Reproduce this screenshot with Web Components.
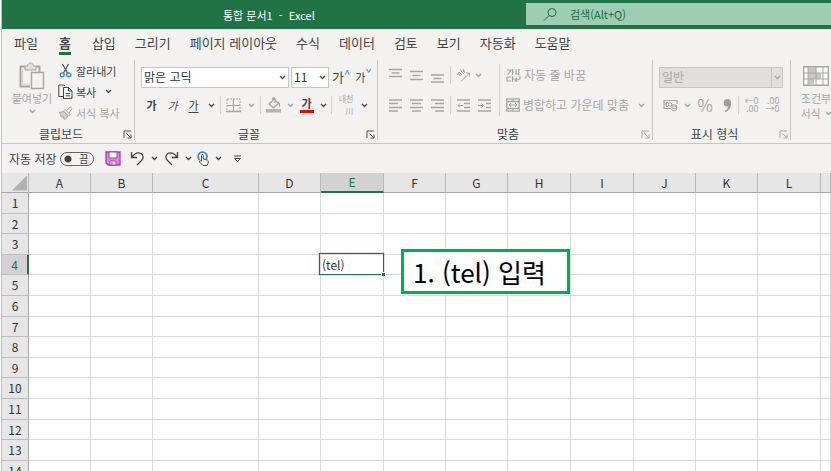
<!DOCTYPE html>
<html lang="ko">
<head>
<meta charset="utf-8">
<title>통합 문서1 - Excel</title>
<style>
html, body { height: 100%; }
body { margin: 0; overflow: hidden; background: #fff; color: #444; font: 12px/16px "Noto Sans CJK KR", "Noto Sans", sans-serif; }
</style>
</head>
<body>
<xl-window></xl-window>
<script>
const icons = {
  caret: [7, 5, '<path d="M1 1l2.5 2.5L6 1" stroke-width="1.3"/>'],
  search: [15, 15, '<circle cx="9" cy="5.5" r="4"/><path d="M6 8.5L1 13.5"/>'],
  launcher: [9, 9, '<path d="M1 8V1h7M3.500 3.500L8 8M8 4.500V8H4.500"/>'],
  paste: [26, 28, '<path d="M6 4.500H1.500v20H11M17 4.500h3.500V10" stroke-width="2"/><path fill="#e4e2e0" d="M6 8V4h2.500c.5-4 5.500-4 6 0H17v4z"/><path fill="#f3f2f1" d="M12.500 10.500h12v16h-12z" stroke-width="1.400"/><path d="M3.500 7v15H11" stroke="#d6d4d2"/>'],
  cut: [15, 15, '<path d="M4.500 1l5 9M10.500 1l-5 9" stroke="#555" stroke-width="1.300"/><circle cx="4.200" cy="11.800" r="2" stroke="#2b88d8" stroke-width="1.300"/><circle cx="10.800" cy="11.800" r="2" stroke="#2b88d8" stroke-width="1.300"/>'],
  copy: [15, 15, '<path d="M6 12.500H.8V1h5l1 1"/><path fill="#fff" d="M5.500 3.500h5l3.500 3.500v7.500H5.500z"/><path d="M10.500 3.500V7H14M7.500 9.500H12M7.500 11.800H12"/>'],
  painter: [15, 14, '<path fill="#d2d0ce" d="M1 6.500l4.500-1L10 10l-3 3.500-2-1.500.5-1.500-2 .5-1-1.500.5-1z"/><path fill="#f3f2f1" d="M5.500 5L7 3.500l5 5-1.500 1.500zM8.500 4.500l4-3.500L14 2.500 11 7"/>'],
  border: [15, 15, '<path d="M1 1h13v12" stroke-dasharray="2 1"/><path d="M1 1v12" stroke-dasharray="2 1"/><path d="M1 7.500h13M7.500 1v12"/><path d="M0 13.500h15" stroke-width="1.500"/>'],
  fill: [16, 16, '<path stroke-width="1.300" d="M3 7l5-5 4.500 4.500L7.500 11zM6.500 4.500V2c0-1.500 2.500-1.500 2.500 0v4M12 5c1.500 1.500 2 3 1.500 5"/><path fill="#b5b3b1" stroke="none" d="M0 12h15v3.500H0z"/>'],
  top: [13, 15, '<path d="M0 1.500h13M2.500 5h8M0 8.500h13" stroke-width="1.300"/>'],
  middle: [13, 15, '<path d="M0 3.500h13M2.500 7.500h8M0 11.500h13" stroke-width="1.300"/>'],
  bottom: [13, 15, '<path d="M0 7h13M2.500 10.500h8M0 14h13" stroke-width="1.300"/>'],
  left: [13, 13, '<path d="M0 1h13M0 4.500h9M0 8.500h13M0 12h9" stroke-width="1.300"/>'],
  center: [13, 13, '<path d="M0 1h13M2 4.500h9M0 8.500h13M2 12h9" stroke-width="1.300"/>'],
  right: [13, 13, '<path d="M0 1h13M4 4.500h9M0 8.500h13M4 12h9" stroke-width="1.300"/>'],
  outdent: [13, 13, '<path stroke-width="1.300" d="M0 1h13M7 4.500h6M7 8.500h6M0 12h13"/><path d="M6 6.500H1M3 4.500L1 6.500l2 2"/>'],
  indent: [13, 13, '<path stroke-width="1.300" d="M0 1h13M8 4.500h5M8 8.500h5M0 12h13"/><path d="M0 6.500h5.500M3.500 4.500l2 2-2 2"/>'],
  orient: [15, 15, '<path d="M5 13.500L13.500 5M10 5h3.500v3.500M1 7l2-3 3 3M2 5.500l2.500 2.500M5 3l3 3M4.500 1.500l1 2M7 1l1.500 4M6 4.500L9 2.500"/>'],
  wrap: [15, 15, '<path stroke-width="1.200" d="M1 2h4L2 6.500M6.500 1v6M6.500 4H8M10 1.500V6h3M12.800 1v6.500M5 9H1v4h4M6.500 8v6M6.500 11H8M14 8v2.500c0 1.500-2 1.500-5 1.500M11 10l-2 2 2 2"/>'],
  merge: [14, 14, '<path d="M.8.8h12.400v12.400H.8zM1 3.500h12M1 10.500h12M7 1v2.500M7 10.500V13" stroke-width="1.300"/><path d="M3 7h8M5 5L3 7l2 2M9 5l2 2-2 2"/>'],
  money: [15, 13, '<path stroke-width="1.200" d="M8 9.500H1v-8h13V5M3 3.500h2M3 7.500h2M3 3.500v4"/><circle cx="7" cy="5.500" r="1.800"/><path fill="#f3f2f1" d="M9 6.500v4.500c0 1 4.500 1 4.500 0V6.500c0-1-4.500-1-4.500 0c0 1 4.500 1 4.500 0M9 9c0 1 4.500 1 4.500 0"/>'],
  comma: [9, 13, '<path fill="#a19f9d" stroke="none" d="M4.500 0c2.500 0 3.700 1.800 3.700 4.200C8.200 8.500 6 11.500 2 13v-1.500c2-.8 3-2 3.200-4C2.700 8.200.7 6.500.7 4S2.200 0 4.500 0z"/>'],
  conditional: [26, 20, '<path fill="#fff" d="M.7.7h24.600v18.600H.7z" stroke-width="1.400"/><path fill="#c8c6c4" stroke="none" d="M5 1h8v6H5zM5 7h13v6H5zM5 13h6v6H5z"/><path d="M5 1v18M20 1v18M13 1v18M1 7h24M1 13h24"/>'],
  save: [16, 15, '<path fill="#d58fd9" stroke="#a83bb0" stroke-width="1.300" d="M1 1h14v13H3l-2-2z"/><path fill="#fff" stroke="#a83bb0" d="M4 1h8v6H4zM5 10h6v4H5z"/><path stroke="#a83bb0" d="M7 11v3"/>'],
  undo: [15, 15, '<path d="M1.500 1v5.500H7M1.500 6.500C5 2 8 1 11 2.500c3 2 2.500 5 .5 7L7 14" stroke-width="1.300"/>'],
  redo: [15, 15, '<path d="M13.500 1v5.500H8M13.500 6.500C10 2 7 1 4 2.500c-3 2-2.500 5-.5 7L8 14" stroke-width="1.300"/>'],
  touch: [13, 16, '<path stroke="#2b88d8" stroke-width="1.600" d="M2.500 9C-.5 5 2 1 5.500 1s6 4 3.500 7"/><path fill="#fff" d="M4.500 10V4.500c0-1.300 1.800-1.300 1.800 0V8l4 1c1.500.5 1.200 3-.3 5.500H6L2.500 11c-.5-1.300 1-1.700 2-1z"/>'],
  customize: [9, 8, '<path d="M1 1h7M1.500 3.500L4.500 6.500l3-3z"/>'],
};

function define(name, html, setup) {
  const template = document.createElement('template');
  template.innerHTML = html;
  customElements.define(name, class extends HTMLElement {
    constructor() {
      super();
      this.attachShadow({ mode: 'open' }).append(template.content.cloneNode(true));
    }
    connectedCallback() { if (setup) setup(this, this.shadowRoot); }
  });
}

define('xl-icon', `<style>:host{display:inline-flex;flex:none}svg{display:block;fill:none;stroke:currentColor}</style>`, (el, root) => {
  const [w, h, body] = icons[el.getAttribute('name')];
  root.innerHTML += `<svg width="${w}" height="${h}" viewBox="0 0 ${w} ${h}" aria-hidden="true">${body}</svg>`;
});

define('xl-tool', `<style>
:host{display:flex;flex:none;width:var(--w,21px);color:#444}
:host([dim]){color:#a8a6a4}
button{all:unset;box-sizing:border-box;width:100%;display:flex;align-items:center;justify-content:center;gap:3px;white-space:nowrap}
:host([wide]){width:auto}
:host([wide]) button{justify-content:flex-start}
:host([tall]) button{flex-direction:column;justify-content:flex-start;gap:0}
</style><button type="button"><slot></slot></button>`, (el, root) => {
  if (el.title) { root.querySelector('button').setAttribute('aria-label', el.title); el.removeAttribute('title'); }
});

define('xl-combo', `<style>
:host{display:grid;flex:none;width:var(--w);height:21px;align-items:center}
select{grid-area:1/1;appearance:none;box-sizing:border-box;width:100%;height:100%;margin:0;padding:0 16px 0 2px;border:1px solid #c8c6c4;border-radius:0;background:#fff;color:#333;font:inherit;opacity:1}
xl-icon{grid-area:1/1;justify-self:end;margin-right:3px;pointer-events:none;color:#444}
:host([dim]) select{background:#e1dfdd;color:#a8a6a4;border-color:#c8c6c4}
:host([dim]) xl-icon{color:#a8a6a4;border-left:1px solid #c8c6c4;padding:7px 0 7px 2px;margin-right:2px}
</style><select><option></option></select><xl-icon name="caret"></xl-icon>`, (el, root) => {
  const select = root.querySelector('select');
  select.setAttribute('aria-label', el.getAttribute('label'));
  select.options[0].textContent = el.getAttribute('value');
  select.disabled = el.hasAttribute('dim');
});

define('xl-group', `<style>
:host{display:grid;grid-template-rows:1fr 12px;flex:none;box-sizing:border-box;width:var(--group);border-right:1px solid #c8c6c4;height:80px}
.body{min-width:0}
footer{display:grid;grid-template-columns:1fr 14px;align-items:center;text-align:center;line-height:12px}
footer span{white-space:nowrap}
button{all:unset;display:flex;justify-self:end;margin-right:2px;color:var(--launch,#555)}
</style><div class="body"><slot></slot></div><footer><span></span><button type="button" aria-label="옵션"><xl-icon name="launcher"></xl-icon></button></footer>`, (el, root) => {
  root.querySelector('footer span').textContent = el.getAttribute('label');
});

define('xl-titlebar', `<style>
:host{display:grid;grid-template-columns:524px 1fr;height:29px;background:#217346;color:#fff;align-items:center;font-size:11px}
h1{margin:0;font:inherit;padding-left:221px;white-space:pre}
label{display:flex;align-items:center;gap:12px;height:22px;background:#9fcdb3;color:#1e6b41;padding-left:17px;margin-bottom:1px}
input{all:unset;flex:1;min-width:0;font-size:11px}
input::placeholder{color:#1e6b41;opacity:1}
</style><h1>통합 문서1  -  Excel</h1><label aria-label="검색"><xl-icon name="search"></xl-icon><input type="search" placeholder="검색(Alt+Q)"></label>`);

define('xl-tabs', `<style>
:host{display:block;background:#f3f2f1;border-top:1px solid #dcebe2}
nav{display:flex;gap:19px;padding:4px 12px 0;font-size:13px;line-height:18px;height:26px;box-sizing:border-box}
a{color:#444;text-decoration:none;white-space:nowrap;height:22px}
a[aria-current]{margin:0 2px;font-weight:700;border-bottom:3px solid #217346;height:18px}
</style><nav aria-label="리본"></nav>`, (el, root) => {
  root.querySelector('nav').innerHTML = ['파일', '홈', '삽입', '그리기', '페이지 레이아웃', '수식', '데이터', '검토', '보기', '자동화', '도움말']
    .map(t => `<a href="#"${t === '홈' ? ' aria-current="page"' : ''}>${t}</a>`).join('');
});

define('xl-ribbon', `<style>
:host{display:flex;box-sizing:border-box;height:88px;padding-top:4px;background:#f3f2f1;border-bottom:1px solid #c8c6c4;overflow:hidden}
.row{display:flex;align-items:center}
.sep{flex:none;width:1px;height:18px;background:#d2d0ce}
.clip{display:grid;grid-template-columns:50px 1fr;padding-left:5px;column-gap:1px;font-size:11px}
.clip xl-tool[tall]{--w:50px;line-height:16px;padding-top:2px}
.clip .rows{display:grid;grid-auto-rows:21px}
.one{height:30px;padding:2px 6px 0}
.two{height:26px;padding:0 1px}
.hangul{font-size:11px}
u{text-underline-offset:2px}
.colour{border-bottom:3px solid #f00;width:14px;text-align:center;line-height:13px;font-weight:700}
sup{font-size:11px;line-height:8px;color:#2b88d8;align-self:flex-start}
.hanja{font-size:8px;line-height:12px;text-align:right}
.align{display:grid;grid-template-columns:114px 1px 1fr;align-items:center;padding-left:7px}
.align .rule{height:52px;background:#d2d0ce}
.align .row{height:30px}
.align .text{padding-left:6px}
.align .text .row{gap:9px}
.percent{font-size:17px}
.dec{font-size:9px;line-height:8px;text-align:right;white-space:pre}
.cond{--w:50px;line-height:15px;padding-top:6px;font-size:11px}
.cond span{display:flex;align-items:center;gap:4px}
.cond xl-icon[name=conditional]{margin-bottom:5px}
</style>
<xl-group label="클립보드" style="--group:133px"><div class="clip">
<xl-tool tall dim><xl-icon name="paste"></xl-icon>붙여넣기<xl-icon name="caret" style="margin-top:3px"></xl-icon></xl-tool>
<div class="rows"><xl-tool wide><xl-icon name="cut"></xl-icon><span>잘라내기</span></xl-tool>
<xl-tool wide><xl-icon name="copy"></xl-icon><span>복사</span><xl-icon name="caret" style="margin-left:6px"></xl-icon></xl-tool>
<xl-tool wide dim><xl-icon name="painter"></xl-icon><span>서식 복사</span></xl-tool></div></div></xl-group>
<xl-group label="글꼴" style="--group:243px">
<div class="row one"><xl-combo label="글꼴" value="맑은 고딕" style="--w:148px"></xl-combo><xl-combo label="글꼴 크기" value="11" style="--w:38px;margin-left:2px"></xl-combo>
<xl-tool title="글꼴 크기 크게" style="--w:24px"><span class="row" style="font-size:13px">가<sup>^</sup></span></xl-tool><xl-tool title="글꼴 크기 작게"><span class="row" style="font-size:11px">가<sup>ˇ</sup></span></xl-tool></div>
<div class="row two hangul" style="padding-left:6px"><xl-tool title="굵게"><b>가</b></xl-tool><xl-tool title="기울임꼴"><i>가</i></xl-tool><xl-tool title="밑줄"><u>가</u></xl-tool><xl-tool title="밑줄 종류" style="--w:14px"><xl-icon name="caret"></xl-icon></xl-tool><span class="sep" style="margin:0 2px"></span>
<xl-tool title="테두리" dim><xl-icon name="border"></xl-icon></xl-tool><xl-tool title="테두리 종류" dim style="--w:14px"><xl-icon name="caret"></xl-icon></xl-tool><span class="sep" style="margin:0 2px"></span>
<xl-tool title="채우기 색" dim><xl-icon name="fill"></xl-icon></xl-tool><xl-tool title="채우기 색 선택" dim style="--w:12px"><xl-icon name="caret"></xl-icon></xl-tool><xl-tool title="글꼴 색"><span class="colour">가</span></xl-tool><xl-tool title="글꼴 색 선택" style="--w:12px"><xl-icon name="caret"></xl-icon></xl-tool><span class="sep" style="margin:0 2px"></span>
<xl-tool title="윗주 필드" dim style="--w:24px"><span class="hanja">내천<br>川</span></xl-tool><xl-tool title="윗주 옵션" style="--w:12px"><xl-icon name="caret"></xl-icon></xl-tool></div></xl-group>
<xl-group label="맞춤" style="--group:275px;--launch:#a8a6a4"><div class="align">
<div><div class="row"><xl-tool title="위쪽 맞춤" dim><xl-icon name="top"></xl-icon></xl-tool><xl-tool title="가운데 맞춤" dim><xl-icon name="middle"></xl-icon></xl-tool><xl-tool title="아래쪽 맞춤" dim><xl-icon name="bottom"></xl-icon></xl-tool><span class="sep" style="margin:0 2px"></span><xl-tool title="방향" dim><xl-icon name="orient"></xl-icon></xl-tool><xl-tool title="방향 선택" dim style="--w:8px"><xl-icon name="caret"></xl-icon></xl-tool></div>
<div class="row"><xl-tool title="왼쪽 맞춤" dim><xl-icon name="left"></xl-icon></xl-tool><xl-tool title="가운데 맞춤" dim><xl-icon name="center"></xl-icon></xl-tool><xl-tool title="오른쪽 맞춤" dim><xl-icon name="right"></xl-icon></xl-tool><span class="sep" style="margin:0 2px"></span><xl-tool title="내어쓰기" dim><xl-icon name="outdent"></xl-icon></xl-tool><xl-tool title="들여쓰기" dim><xl-icon name="indent"></xl-icon></xl-tool></div></div>
<span class="rule"></span>
<div class="text"><div class="row"><xl-tool wide dim><xl-icon name="wrap"></xl-icon><span>자동 줄 바꿈</span></xl-tool></div><div class="row"><xl-tool wide dim><xl-icon name="merge"></xl-icon><span>병합하고 가운데 맞춤</span></xl-tool><xl-tool title="병합 옵션" dim style="--w:7px"><xl-icon name="caret"></xl-icon></xl-tool></div></div></div></xl-group>
<xl-group label="표시 형식" style="--group:138px;--launch:#a8a6a4"><div class="row one"><xl-combo dim label="표시 형식" value="일반" style="--w:124px"></xl-combo></div>
<div class="row two" style="padding-left:7px"><xl-tool title="회계 표시 형식" dim><xl-icon name="money"></xl-icon></xl-tool><xl-tool title="통화 선택" dim style="--w:12px"><xl-icon name="caret"></xl-icon></xl-tool><xl-tool title="백분율" dim style="--w:24px"><span class="percent">%</span></xl-tool><xl-tool title="쉼표" dim><xl-icon name="comma"></xl-icon></xl-tool><span class="sep" style="margin:0 2px 0 0"></span><xl-tool title="자릿수 늘림" dim><span class="dec">←0
.00</span></xl-tool><xl-tool title="자릿수 줄임" dim><span class="dec">.00
→0</span></xl-tool></div></xl-group>
<xl-tool class="cond" tall dim><xl-icon name="conditional"></xl-icon>조건부<span>서식 <xl-icon name="caret"></xl-icon></span></xl-tool>`);

define('xl-quick-access', `<style>
:host{display:flex;align-items:center;height:29px;background:#f3f2f1;padding-left:7px}
label{display:flex;align-items:center;gap:3px;white-space:nowrap}
.switch{display:grid;align-items:center;width:34px;height:14px}
input{grid-area:1/1;appearance:none;margin:0;box-sizing:border-box;width:34px;height:14px;border:1px solid #666;border-radius:7px;background:radial-gradient(circle at 7px 6px,#444 3px,transparent 4px)}
.switch span{grid-area:1/1;justify-self:end;margin-right:5px;font-size:10px;line-height:12px;pointer-events:none}
div{display:flex;align-items:center;padding-left:7px}
</style><label>자동 저장<span class="switch"><input type="checkbox" role="switch"><span>끔</span></span></label>
<div><xl-tool title="저장" style="--w:24px"><xl-icon name="save"></xl-icon></xl-tool>
<xl-tool title="실행 취소" style="--w:26px"><xl-icon name="undo"></xl-icon></xl-tool><xl-tool title="실행 취소 목록" style="--w:8px"><xl-icon name="caret"></xl-icon></xl-tool>
<xl-tool title="다시 실행" style="--w:26px"><xl-icon name="redo"></xl-icon></xl-tool><xl-tool title="다시 실행 목록" style="--w:8px"><xl-icon name="caret"></xl-icon></xl-tool>
<xl-tool title="터치/마우스 모드" style="--w:22px"><xl-icon name="touch"></xl-icon></xl-tool><xl-tool title="모드 선택" style="--w:8px"><xl-icon name="caret"></xl-icon></xl-tool>
<xl-tool title="빠른 실행 도구 모음 사용자 지정" style="--w:30px"><xl-icon name="customize"></xl-icon></xl-tool></div>`);

define('xl-sheet', `<style>
:host{display:block;position:relative;overflow:hidden;flex:1}
table{table-layout:fixed;width:100%;border-spacing:0;color:#333}
th,td{box-sizing:border-box;padding:0;height:21px;line-height:18px;border:0 solid #dadada;border-width:0 1px 1px 0;overflow:hidden;font-weight:400;white-space:nowrap}
tbody tr:nth-child(5n+2)>*,tbody tr:nth-child(5n+4)>*{height:20px}
thead th{height:20px;background:#e6e6e6;border-right-color:#b8b8b8;border-bottom-color:#a6a6a6;line-height:17px}
tbody th{background:#e6e6e6;border-right-color:#a6a6a6;border-bottom-color:#bdbdbd}
thead th:first-child::after{content:"";display:block;width:15px;height:15px;margin:1px 1px 0 auto;background:#b2b2b2;clip-path:polygon(100% 0,100% 100%,0 100%)}
thead th.on{background:#d2d2d2;color:#217346;border-bottom:2px solid #217346;line-height:16px}
tbody th.on{background:#d2d2d2;color:#217346;border-right:2px solid #217346}
td.on{position:relative;overflow:visible;padding-left:1px}
td.on::before{content:"";position:absolute;inset:-2px -1px -1px -2px;border:1px solid #217346;box-shadow:0 0 1px #217346}
td.on::after{content:"";position:absolute;right:-2px;bottom:-2px;width:3px;height:3px;background:#217346;border:solid #fff;border-width:1px 0 0 1px}
</style><table><colgroup></colgroup><thead></thead><tbody></tbody></table><slot></slot>`, (el, root) => {
  const widths = [27, 62, 62, 106, 62, 63, 62, 62, 63, 63, 62, 62, 63];
  root.querySelector('colgroup').innerHTML = widths.map(w => `<col style="width:${w}px">`).join('') + '<col>';
  const letters = [...'ABCDEFGHIJKL', ''];
  root.querySelector('thead').innerHTML = '<tr><th aria-label="모두 선택"></th>' + letters.map(c => `<th scope="col"${c === 'E' ? ' class="on"' : ''}>${c}</th>`).join('') + '</tr>';
  root.querySelector('tbody').innerHTML = Array.from({ length: 14 }, (_, i) =>
    `<tr><th scope="row"${i === 3 ? ' class="on"' : ''}>${i + 1}</th>` + letters.map(c => i === 3 && c === 'E' ? '<td class="on">(tel)</td>' : '<td></td>').join('') + '</tr>').join('');
});

define('xl-note', `<style>
:host{position:absolute;left:399px;top:76px;box-sizing:border-box;padding:0 21px 0 9px;border:3px solid #00b050;background:#fff;color:#000;font-size:26px;line-height:39px;white-space:nowrap}
</style><slot></slot>`);

define('xl-window', `<style>
:host{display:flex;flex-direction:column;box-sizing:border-box;height:100%;border-left:1px solid #c0c0c0;margin-left:1px}
</style><xl-titlebar></xl-titlebar><xl-tabs></xl-tabs><xl-ribbon></xl-ribbon><xl-quick-access></xl-quick-access><xl-sheet><xl-note>1. (tel) 입력</xl-note></xl-sheet>`);
</script>
</body>
</html>
